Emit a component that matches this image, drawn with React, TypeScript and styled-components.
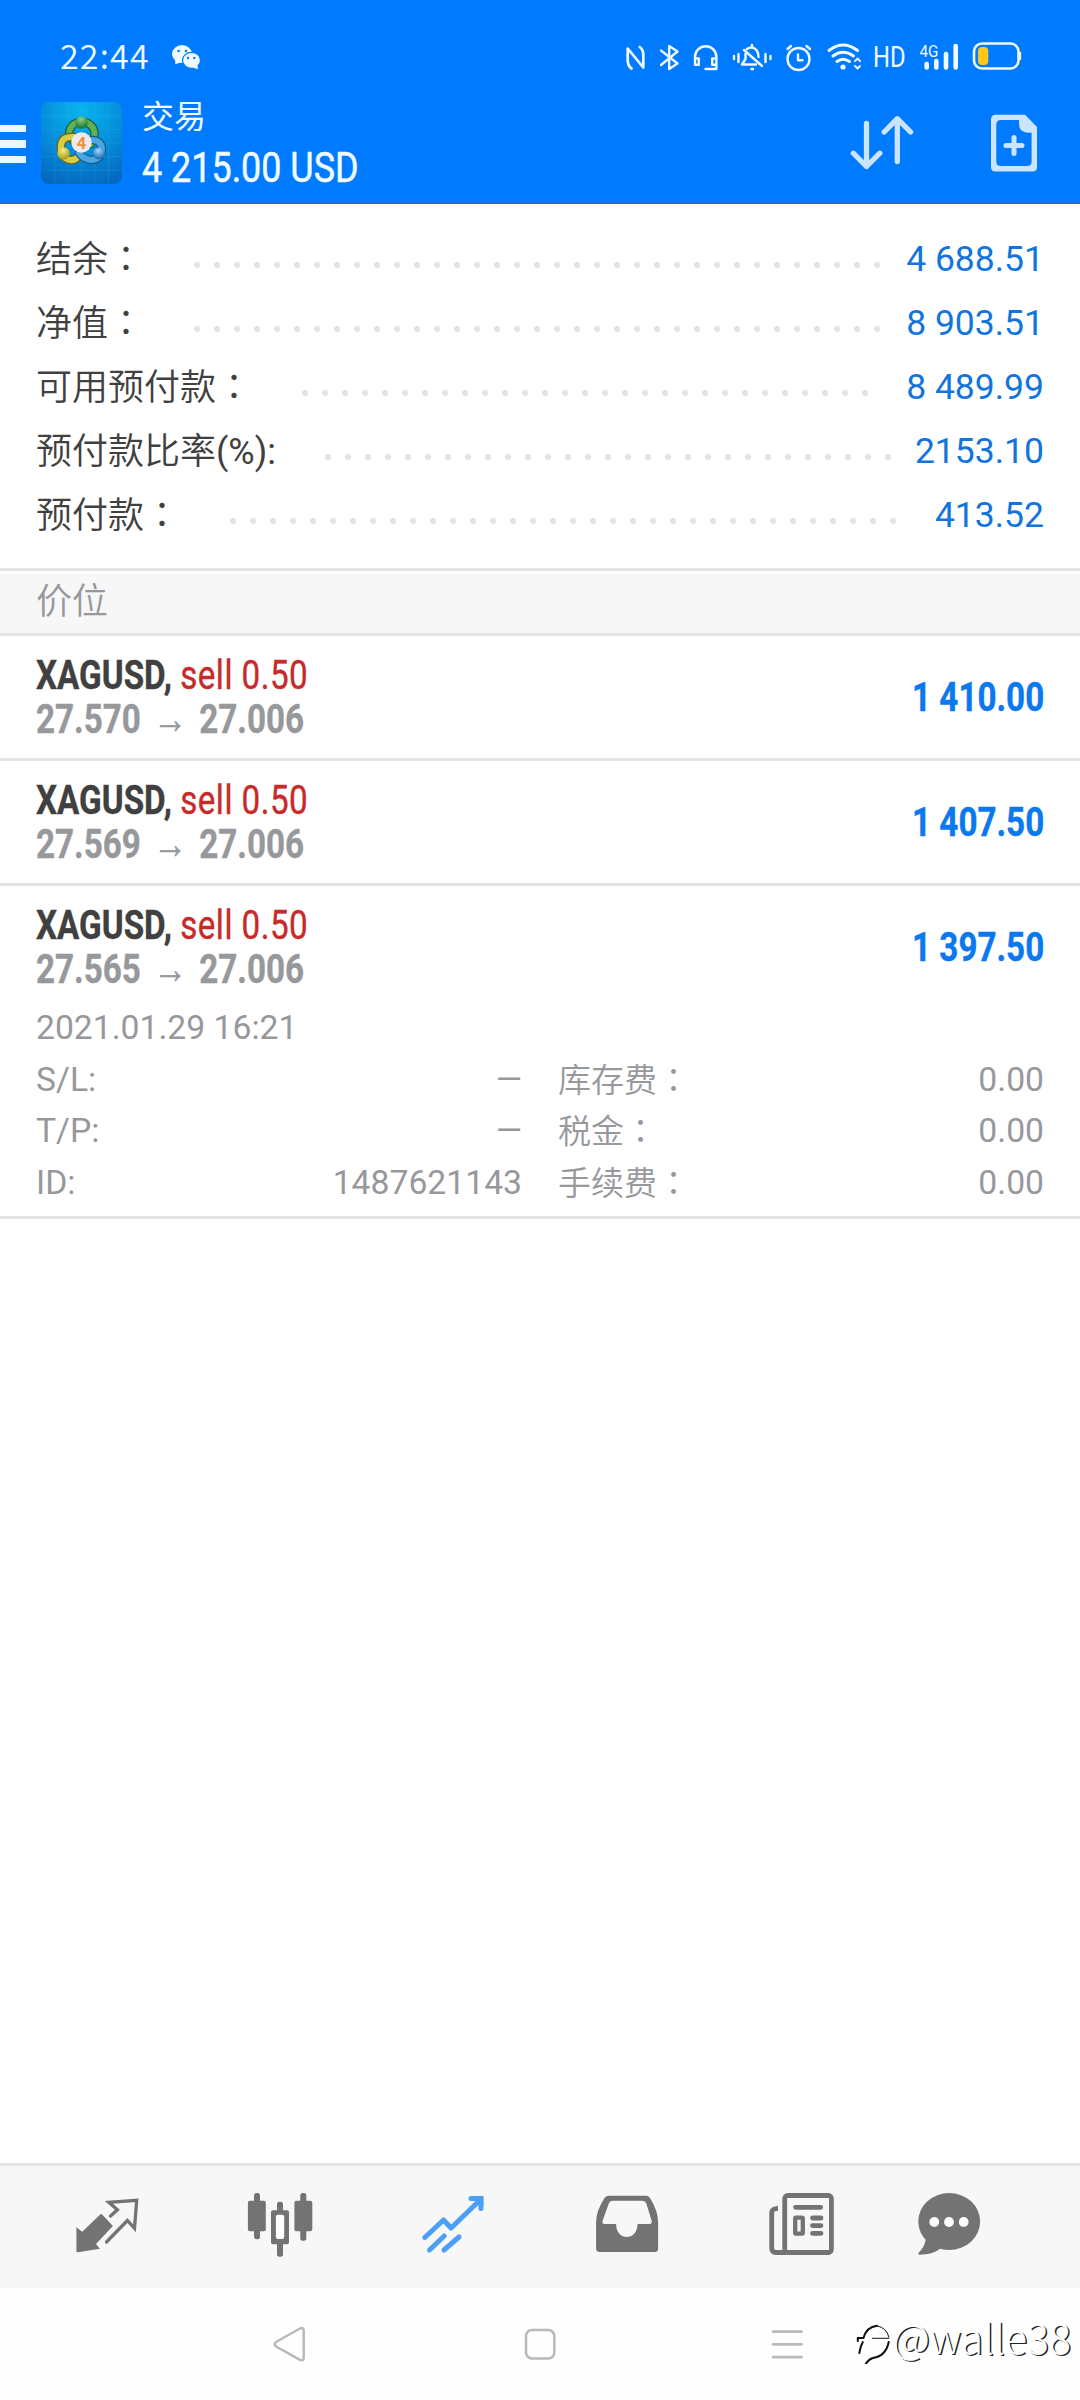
import React from "react";
import styled, { createGlobalStyle } from "styled-components";

const latin = `Roboto, "Noto Sans CJK SC", sans-serif`;
const cjk = `"Noto Sans CJK SC", Roboto, sans-serif`;

const GlobalStyle = createGlobalStyle`
  body { margin: 0; background: #fff; }
  * { box-sizing: border-box; }
`;

const Screen = styled.div`
  position: relative;
  display: flex;
  flex-direction: column;
  width: 1080px;
  height: 2400px;
  overflow: hidden;
  background: #fff;
  font-family: ${latin};
`;

const Header = styled.header`
  height: 204px;
  background: #007aff;
  border-bottom: 2px solid #0c6fd6;
  color: #f0fbff;
`;

const StatusBar = styled.div`
  display: flex;
  align-items: center;
  height: 84px;
  padding: 30px 50px 0 60px;
`;

const Clock = styled.span`
  width: 110px;
  height: 54px;
  font: 350 34px/50px ${cjk};
  letter-spacing: 1.2px;
`;

const StatusIcons = styled.div`
  display: flex;
  margin-left: auto;
`;

const Icon = styled.svg`
  display: block;
  flex: none;
  fill: none;
  stroke-linecap: round;
  stroke-linejoin: round;
`;

const HdLabel = styled.span`
  width: 42px;
  height: 54px;
  padding-left: 5px;
  font: 400 29px/54px ${latin};
`;

const Narrow = styled.span<{ $scale: number; $origin?: string }>`
  display: inline-block;
  white-space: pre;
  transform: scaleX(${(p) => p.$scale});
  transform-origin: ${(p) => p.$origin ?? "left"} center;
`;

const Toolbar = styled.div`
  display: flex;
  align-items: center;
  height: 118px;
`;

const MenuButton = styled.div`
  display: grid;
  gap: 8px;
  width: 26px;
  margin: 2px 15px 0 0;
`;

const MenuLine = styled.i`
  height: 7.5px;
  background: #e9f8ff;
`;

const TitleBlock = styled.div`
  width: 680px;
  height: 98px;
  margin-left: 20px;
`;

const Title = styled.div`
  height: 49px;
  font: 400 32px/40px ${cjk};
`;

const Balance = styled.div`
  height: 49px;
  font: 400 42px/49px ${latin};
  -webkit-text-stroke: 0.5px currentColor;
`;

const ToolIcons = styled.div`
  display: flex;
  margin-left: auto;
  gap: 68px;
  padding-right: 38px;
`;

const Summary = styled.section`
  height: 364px;
  padding: 22px 36px 0;
`;

const SummaryRow = styled.div`
  display: flex;
  height: 64px;
`;

const SummaryLabel = styled.span`
  height: 64px;
  font: 350 36px/69px ${latin};
  color: #404040;
  white-space: nowrap;
`;

const Colon = styled.span`
  font-family: "Noto Sans CJK TC", sans-serif;
  line-height: 0;
`;

const LatinTail = styled.span`
  font-weight: 400;
`;

const Dots = styled.span<{ $count: number }>`
  width: ${(p) => p.$count * 20}px;
  height: 64px;
  margin-left: 42.5px;
  background: radial-gradient(circle at 10px 39px, #e4e4e4 2.8px, transparent 3.6px) 0 0 / 20px 64px;
`;

const SummaryValue = styled.span`
  margin-left: auto;
  font: 400 35.5px/67px ${latin};
  color: #1274dc;
`;

const SectionTitle = styled.div`
  height: 68px;
  border-top: 3px solid #e4e4e4;
  border-bottom: 3px solid #e4e4e4;
  padding: 3px 0 0;
  background: #f7f7f7;
  background-clip: content-box;
  font: 350 36px/49px ${cjk};
  color: #97989b;
`;

const SectionText = styled.div`
  height: 59px;
  padding-left: 36px;
`;

const Position = styled.article`
  border-bottom: 3px solid #e4e4e4;
`;

const PositionHead = styled.div`
  display: flex;
  align-items: center;
  justify-content: space-between;
  height: 122px;
  padding: 0 36px;
`;

const Line = styled.div<{ $color: string }>`
  height: 44px;
  font: 700 41px/44px ${latin};
  color: ${(p) => p.$color};
  -webkit-text-stroke: 0.4px currentColor;
  white-space: pre;
`;

const Side = styled.span`
  font-weight: 400;
  letter-spacing: 0.55px;
  color: #c62a2a;
`;

const Arrow = styled.span`
  display: inline-block;
  width: 72px;
  font: 400 42px/30px "Liberation Sans", sans-serif;
  text-align: center;
`;

const Opened = styled.div`
  height: 39px;
  margin-bottom: 7px;
  padding-left: 36px;
  font: 400 33.7px/39px ${latin};
  color: #97989b;
`;

const Details = styled.div`
  display: grid;
  grid-template-columns: 486px 486px;
  grid-template-rows: 51px 52px 51px;
  column-gap: 36px;
  height: 162px;
  padding: 0 36px;
`;

const Detail = styled.div`
  display: flex;
  justify-content: space-between;
  font: 400 33.7px/51px ${latin};
  color: #97989b;
`;

const DetailLabel = styled.span`
  height: 51px;
  font: 350 33px/48px ${cjk};
`;

const TabBar = styled.nav`
  display: flex;
  align-items: center;
  height: 125px;
  margin-top: auto;
  padding: 0 0 0 21px;
  border-top: 3px solid #e4e4e4;
  background: #f7f7f7;
`;

const Tab = styled.div<{ $width: number }>`
  display: flex;
  justify-content: center;
  width: ${(p) => p.$width}px;
`;

const SystemBar = styled.div`
  display: flex;
  justify-content: space-between;
  height: 112px;
  padding: 37px 275px 0 271px;
  background: #fefefe;
`;

const Watermark = styled.div`
  position: absolute;
  right: 9px;
  bottom: 40px;
  display: flex;
  gap: 2px;
  height: 48px;
  font: 300 41px/48px ${cjk};
  color: #fff;
  text-shadow: 1.5px 1px 0 #222;
`;

const WatermarkMark = styled(Icon)`
  margin-top: 10px;
`;

const WatermarkName = styled.span`
  width: 179px;
  text-align: right;
  white-space: nowrap;
`;

const summary = [
  { label: "结余：", dots: 35, value: "4 688.51" },
  { label: "净值：", dots: 35, value: "8 903.51" },
  { label: "可用预付款：", dots: 29, value: "8 489.99" },
  { label: "预付款比率", tail: "(%):", dots: 29, value: "2153.10" },
  { label: "预付款：", dots: 34, value: "413.52" },
];

const positions = [
  { open: "27.570", profit: "1 410.00" },
  { open: "27.569", profit: "1 407.50" },
  { open: "27.565", profit: "1 397.50", expanded: true },
];

const details = [
  ["S/L:", "—"],
  ["库存费：", "0.00"],
  ["T/P:", "—"],
  ["税金：", "0.00"],
  ["ID:", "1487621143"],
  ["手续费：", "0.00"],
];

const grey = "#737373";

/* The full-width colon sits in the middle of its cell, so it takes the TC face. */
function Label({ text }: { text: string }) {
  if (!text.endsWith("：")) return <>{text}</>;
  return (
    <>
      {text.slice(0, -1)}
      <Colon>：</Colon>
    </>
  );
}

function Glyph({ x, w, children }: { x: number; w: number; children: React.ReactNode }) {
  return (
    <Icon width={w} height={54} viewBox={`${x} 30 ${w} 54`} stroke="#f0fbff" strokeWidth={2.4}>
      {children}
    </Icon>
  );
}

function WeChat() {
  return (
    <Icon width={32} height={54} viewBox="170 30 32 54">
      <ellipse cx="182" cy="54" rx="10" ry="8.900" fill="#f0fbff" />
      <path fill="#f0fbff" d="M175 59l.3 5.200 6-2z" />
      <ellipse cx="191.500" cy="60.300" rx="9" ry="8" fill="#f0fbff" stroke="#007aff" strokeWidth="1.200" />
      <path fill="#f0fbff" d="M192.500 67.400l5.500 1.900-.6-4.500z" />
      <g fill="#007aff">
        <circle cx="178.600" cy="51" r="1.300" />
        <circle cx="186" cy="51" r="1.300" />
        <circle cx="188" cy="58" r="1.200" />
        <circle cx="194.300" cy="58" r="1.200" />
      </g>
    </Icon>
  );
}

function Logo() {
  return (
    <Icon width={81} height={82} viewBox="0 0 81 82">
      <defs>
        <radialGradient id="bg" cx="50%" cy="10%" r="95%">
          <stop offset="0" stopColor="#08b4ee" />
          <stop offset=".5" stopColor="#0590dc" />
          <stop offset="1" stopColor="#0468bf" />
        </radialGradient>
        <radialGradient id="gr" cx="45%" cy="25%" r="75%"><stop offset="0" stopColor="#8fd08a" /><stop offset="1" stopColor="#157331" /></radialGradient>
        <radialGradient id="ye" cx="45%" cy="25%" r="75%"><stop offset="0" stopColor="#f4ed85" /><stop offset="1" stopColor="#a89a10" /></radialGradient>
        <radialGradient id="bl" cx="45%" cy="25%" r="75%"><stop offset="0" stopColor="#9ed8fa" /><stop offset="1" stopColor="#1268ad" /></radialGradient>
      </defs>
      <rect width="81" height="82" rx="8" fill="url(#bg)" />
      <path d="M13.500 1v80M27 1v80M40.500 1v80M54 1v80M67.500 1v80M1 14h79M1 27.500h79M1 41h79M1 54.500h79M1 68h79" stroke="#4cc3f5" strokeOpacity=".16" strokeWidth="1" />
      <path d="M33 39Q26 34 29 27Q32 20 41 20Q50 20 53 28Q55 34 50 42" stroke="#1b5d33" strokeWidth="8.500" />
      <path d="M33 39Q26 34 29 27Q32 20 41 20Q50 20 53 28Q55 34 50 42" stroke="#62b056" strokeWidth="6" />
      <path d="M33 35Q21 34 20 43Q19 51 24 56Q32 61 38 54" stroke="#6c6415" strokeWidth="8.500" />
      <path d="M33 35Q21 34 20 43Q19 51 24 56Q32 61 38 54" stroke="#d9cc45" strokeWidth="6" />
      <path d="M51 38Q60 38 61 47Q60 58 50 58Q42 57 38 51" stroke="#165b8e" strokeWidth="8.500" />
      <path d="M51 38Q60 38 61 47Q60 58 50 58Q42 57 38 51" stroke="#4ba5df" strokeWidth="6" />
      <circle cx="40.500" cy="20.500" r="6.200" fill="url(#gr)" />
      <circle cx="22.500" cy="51.500" r="6.200" fill="url(#ye)" />
      <circle cx="58" cy="51.500" r="6" fill="url(#bl)" />
      <circle cx="40.500" cy="40.500" r="10.200" fill="#eceaea" />
      <text x="40.500" y="46.500" textAnchor="middle" fontFamily="Roboto, sans-serif" fontWeight="700" fontSize="17" fill="#ee9040">4</text>
    </Icon>
  );
}

function StatusGlyphs() {
  return (
    <StatusIcons>
      <Glyph x={620} w={32}>
        <path d="M631.500 68.500Q627.700 66 627.700 60V48.500L643.300 67.500V55Q643.300 49.500 639.800 47" strokeWidth={2.700} />
      </Glyph>
      <Glyph x={652} w={34}>
        <path d="M661 50.500L677.500 63.500L669.200 69V46L677.500 51.500L661 65" />
      </Glyph>
      <Glyph x={686} w={41}>
        <path d="M695 63V57a10.700 10.700 0 0 1 21.400 0V69H705.500M695 58.500h3.800v6.300H695zM716.400 58.500h-4.200v6.300h4.200z" />
      </Glyph>
      <Glyph x={727} w={53}>
        <path d="M734 56v3M738.500 54v8M765.500 54v8M770.500 56v3M752 45v2M747 49Q752 45.500 756.500 50Q758.500 53 758.500 57M745.500 54V59L742 64.500H756M744 50L762 66M751.500 69h1.500" />
      </Glyph>
      <Glyph x={780} w={40}>
        <circle cx={798.500} cy={59} r={11} />
        <path d="M798 54.500V60.200H802.500M787.500 49L791 46M806.500 46L810 49" />
      </Glyph>
      <Glyph x={820} w={48}>
        <path d="M829 50.500Q843 39.500 857.500 50.500M833 56Q843 48.500 853.500 56M837 61.500Q843 57 849.500 61.500" strokeWidth={3} />
        <circle cx={843} cy={67} r={2.600} fill="#f0fbff" stroke="none" />
        <path d="M855 61l2.500-2.500 2.500 2.500M855 66l2.500 2.500 2.500-2.500" strokeWidth={2} />
      </Glyph>
      <HdLabel>
        <Narrow $scale={0.82}>HD</Narrow>
      </HdLabel>
      <Glyph x={910} w={55}>
        <text x={919.500} y={56.500} fontFamily="Roboto, sans-serif" fontSize={17} fill="#f0fbff" stroke="none" textLength={19} lengthAdjust="spacingAndGlyphs">4G</text>
        <path d="M926.700 64v3.500M936.300 61v6.500M946 54v13.500M955.700 46v21.500" strokeWidth={4.600} />
      </Glyph>
      <Glyph x={965} w={65}>
        <rect x={974} y={43.500} width={44.500} height={25} rx={8} strokeWidth={2.600} />
        <rect x={978} y={47} width={10.300} height={18} rx={4} fill="#ffc61a" stroke="none" />
        <path d="M1020 53v6" />
      </Glyph>
    </StatusIcons>
  );
}

const tabs = [
  {
    width: 172,
    art: (
      <>
        <path d="M5.400 60.500V36.300L11.200 40.700 29.200 23.500Q30.200 22.500 31.200 23.500L41.900 35 25 53 28.800 57.700 6.800 61.300Q5.400 61.300 5.400 60.500z" fill={grey} />
        <path d="M39.500 25L46.400 18.700 37.800 11.300 65.700 9.300 63.500 37.300 56.400 29.500 35.500 51" stroke={grey} strokeWidth={3.300} strokeLinejoin="miter" />
      </>
    ),
  },
  {
    width: 174,
    art: (
      <g fill={grey}>
        <rect x={3.900} y={9.700} width={17.900} height={30.500} rx={2} />
        <rect x={10} y={2} width={6} height={46.300} rx={2.500} />
        <rect x={50.400} y={9.700} width={17.900} height={30.500} rx={2} />
        <rect x={56.300} y={2} width={6} height={47.700} rx={2.500} />
        <rect x={33} y={10.700} width={6} height={55} rx={2.500} />
        <rect x={27} y={19.300} width={18} height={34} rx={2} />
        <rect x={31.900} y={23.700} width={8.300} height={24.300} rx={2} fill="#fff" />
      </g>
    ),
  },
  {
    width: 172,
    art: (
      <>
        <path d="M7.800 46.500L26.500 29 34.100 37 63 9M54 7.500H63.900V17.500" stroke="#4b9ff6" strokeWidth={5} />
        <path d="M12.500 59L27.200 45M27 59L42 46" stroke="#4b9ff6" strokeWidth={5} />
        <path d="M56 5h10.500v10z" fill="#4b9ff6" />
      </>
    ),
  },
  {
    width: 176,
    art: (
      <path fill={grey} fillRule="evenodd" d="M18.500 4.700H55Q57.500 4.700 59 7Q67.100 20 67.100 31V57.500Q67.100 61 63.600 61H8.600Q5.100 61 5.100 57.500V31Q5.100 20 13.500 7Q15 4.700 18.500 4.700zM22 9.700Q19 9.700 18 12L11.500 30Q11 33 13.500 33H25.100C25.100 50.300 46.500 50.300 46.500 33H58.500Q61.200 33 60.700 30L55.500 13Q54.300 9.700 51 9.700z" />
    ),
  },
  {
    width: 174,
    art: (
      <>
        <rect x={18.700} y={4.500} width={46.700} height={57} rx={3} stroke={grey} strokeWidth={4.800} />
        <path d="M12 17.300Q5.700 17.300 5.700 22V57Q5.700 61.500 10 61.500H20" stroke={grey} strokeWidth={4.800} strokeLinecap="butt" />
        <path d="M29.500 16.300H54.700M46.500 27H55M46.500 34.600H55M46.500 42.300H55" stroke={grey} strokeWidth={4.800} />
        <rect x={29.200} y={26.700} width={7.600} height={16} rx={1} stroke={grey} strokeWidth={4.300} />
      </>
    ),
  },
  {
    width: 120,
    art: (
      <>
        <ellipse cx={36.200} cy={30.500} rx={30.900} ry={28.500} fill={grey} />
        <path d="M12.700 49Q11 57 5.400 62Q5 63.700 6.500 63.700Q20 63.700 27.500 57.500L22 46z" fill={grey} />
        <g fill="#fff">
          <circle cx={21.300} cy={31} r={4.900} />
          <circle cx={36} cy={31} r={4.900} />
          <circle cx={50.700} cy={31} r={4.900} />
        </g>
      </>
    ),
  },
];

export default function App() {
  return (
    <Screen>
      <GlobalStyle />
      <Header>
        <StatusBar>
          <Clock>22:44</Clock>
          <WeChat />
          <StatusGlyphs />
        </StatusBar>
        <Toolbar>
          <MenuButton>
            <MenuLine />
            <MenuLine />
            <MenuLine />
          </MenuButton>
          <Logo />
          <TitleBlock>
            <Title>交易</Title>
            <Balance>
              <Narrow $scale={0.855}>4 215.00 USD</Narrow>
            </Balance>
          </TitleBlock>
          <ToolIcons>
            <Icon width={70} height={64} viewBox="848 111 70 64" stroke="#cbe5ff" strokeWidth={5.300}>
              <path d="M866.500 123.500V166M853.300 153.200L866.500 166.500 879.800 153.200M897.300 161.500V119M884.200 132L897.300 118.700 910.600 132" />
            </Icon>
            <Icon width={56} height={64} viewBox="986 111 56 64">
              <path fill="#cbe5ff" fillRule="evenodd" d="M996 114.700H1025L1037 127V167Q1037 171.500 1032.500 171.500H995.500Q991 171.500 991 167V119.500Q991 114.700 996 114.700zM1001 120Q996.300 120 996.300 124.500V161.500Q996.300 166 1001 166H1027Q1031.600 166 1031.600 161.500V132.700H1028Q1019 132 1019 124V120z" />
              <path d="M1014 137.500V153.500M1006 145.500H1022" stroke="#cbe5ff" strokeWidth={5} />
            </Icon>
          </ToolIcons>
        </Toolbar>
      </Header>

      <Summary>
        {summary.map((row) => (
          <SummaryRow key={row.label}>
            <SummaryLabel>
              <Label text={row.label} />
              {row.tail && <LatinTail>{row.tail}</LatinTail>}
            </SummaryLabel>
            <Dots $count={row.dots} />
            <SummaryValue>{row.value}</SummaryValue>
          </SummaryRow>
        ))}
      </Summary>

      <SectionTitle>
        <SectionText>价位</SectionText>
      </SectionTitle>

      {positions.map((p) => (
        <Position key={p.open}>
          <PositionHead>
            <div>
              <Line $color="#404040">
                <Narrow $scale={0.81}>
                  XAGUSD, <Side>sell 0.50</Side>
                </Narrow>
              </Line>
              <Line $color="#97989b">
                <Narrow $scale={0.81}>
                  {p.open}
                  <Arrow>→</Arrow>
                  27.006
                </Narrow>
              </Line>
            </div>
            <Line $color="#0a78ee">
              <Narrow $scale={0.81} $origin="right">
                {p.profit}
              </Narrow>
            </Line>
          </PositionHead>
          {p.expanded && (
            <>
              <Opened>2021.01.29 16:21</Opened>
              <Details>
                {details.map(([label, value]) => (
                  <Detail key={label}>
                    {label.endsWith("：") ? (
                      <DetailLabel>
                        <Label text={label} />
                      </DetailLabel>
                    ) : (
                      <span>{label}</span>
                    )}
                    <span>{value}</span>
                  </Detail>
                ))}
              </Details>
            </>
          )}
        </Position>
      ))}

      <TabBar>
        {tabs.map((tab, i) => (
          <Tab key={i} $width={tab.width}>
            <Icon width={72} height={72} viewBox="0 0 72 72">
              {tab.art}
            </Icon>
          </Tab>
        ))}
      </TabBar>
      <SystemBar>
        <Icon width={36} height={38} viewBox="271 2325 36 38" stroke="#b9b9b9" strokeWidth={2.500}>
          <path d="M276 2342L300 2328.500Q303.700 2327 303.700 2331V2357.500Q303.700 2361.500 300 2359.800L276 2346.500Q273.500 2344.300 276 2342z" />
        </Icon>
        <Icon width={36} height={38} viewBox="520 2325 36 38" stroke="#b9b9b9" strokeWidth={2.500}>
          <rect x={526} y={2330} width={28.300} height={28.500} rx={6} />
        </Icon>
        <Icon width={36} height={38} viewBox="769 2325 36 38" stroke="#b9b9b9" strokeWidth={2.700}>
          <path d="M773 2331.700h28.500M773 2344.300h28.500M773 2357.200h28.500" />
        </Icon>
      </SystemBar>
      <Watermark>
        <WatermarkMark width={34} height={42} viewBox="856 2322 34 42" stroke="#111" strokeWidth={2} strokeLinecap="butt">
          <path d="M857.800 2341V2338H863.500Q866.500 2327 877 2325.800M862.800 2342Q860.500 2346 859.300 2353" />
          <path d="M877 2325.800Q887 2328 888.800 2337M872.500 2338.300h16.500" strokeWidth={1} />
          <path d="M888.700 2342Q886 2356 873 2358Q869 2359 866 2363.500" />
        </WatermarkMark>
        <WatermarkName>@walle38</WatermarkName>
      </Watermark>
    </Screen>
  );
}
